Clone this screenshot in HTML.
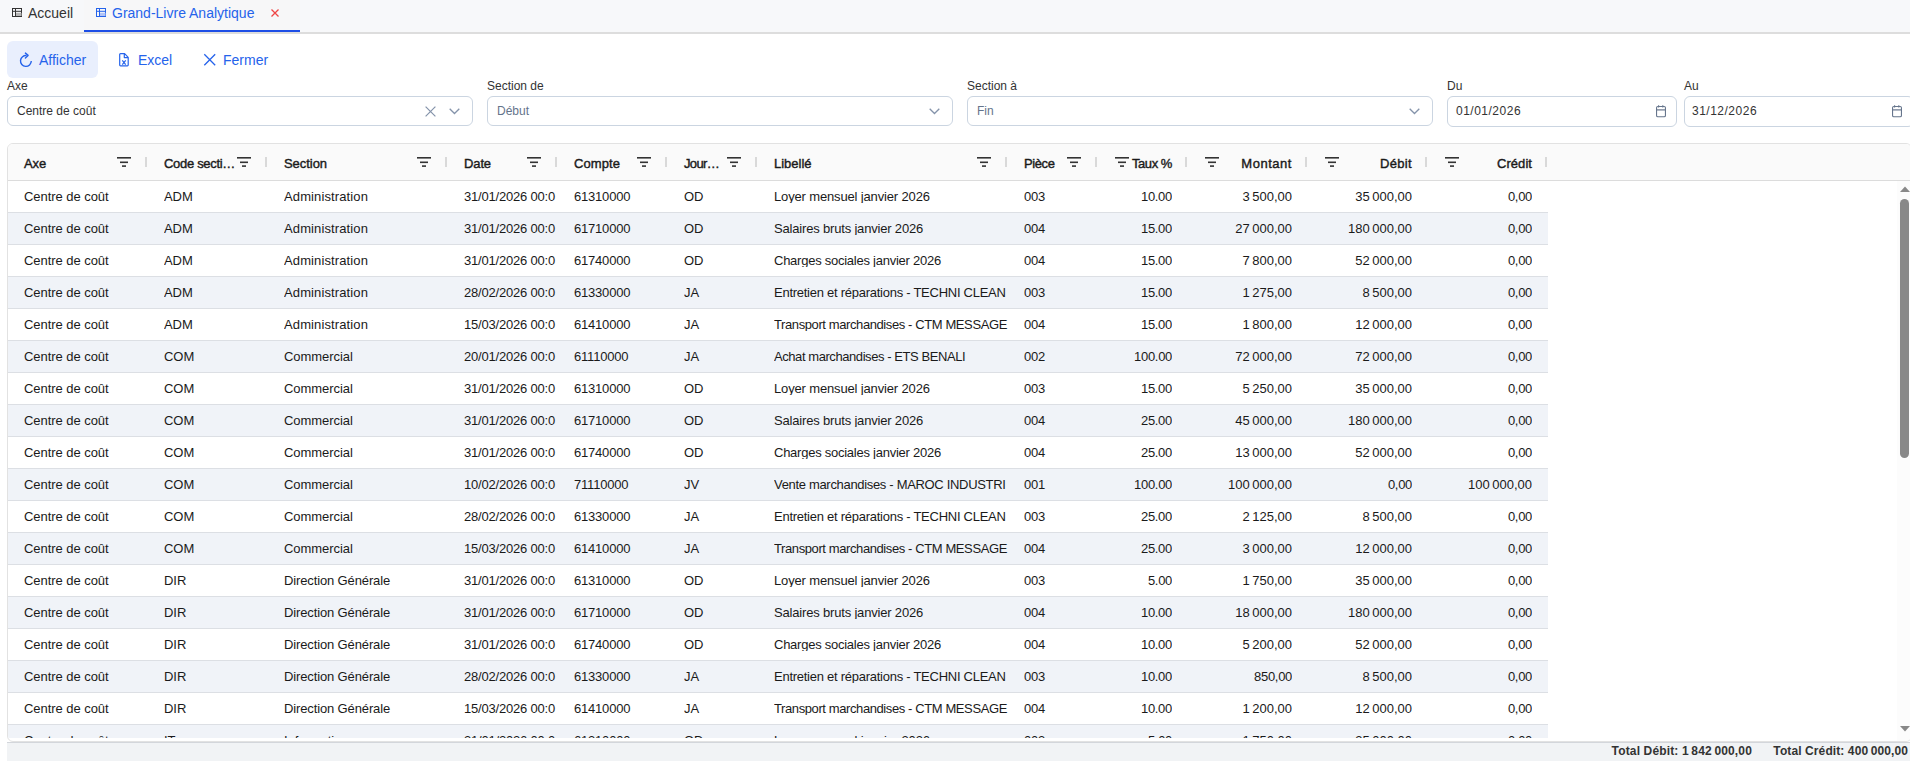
<!DOCTYPE html>
<html><head><meta charset="utf-8"><style>
*{box-sizing:border-box;margin:0;padding:0}
html,body{width:1910px;height:780px;overflow:hidden;background:#fff;font-family:"Liberation Sans",sans-serif;color:#333}
.abs{position:absolute}
#tabs{position:absolute;left:0;top:0;width:1910px;height:34px;background:#f7f8fa;border-bottom:2px solid #dddddd}
.tab{position:absolute;top:0;height:32px;font-size:14px;line-height:14px}
.tab .t{position:absolute;top:6px;white-space:nowrap}
.btn{position:absolute;top:41px;height:37px;border-radius:6px;color:#2563eb;font-size:14px}
.btn .t{position:absolute;top:12px;white-space:nowrap;line-height:14px}
.lbl{position:absolute;top:80px;font-size:12px;line-height:12px;color:#333;white-space:nowrap}
.inp{position:absolute;top:96px;height:30px;border:1px solid #cbd5e1;border-radius:6px;background:#fff;font-size:12px}
.inp .t{position:absolute;top:8px;left:9px;line-height:12px;white-space:nowrap}
#grid{position:absolute;left:7px;top:143px;width:1905px;height:599px;border:1px solid #e2e2e2;border-radius:6px;overflow:hidden;background:#fff}
#hdr{position:absolute;left:0;top:0;width:1906px;height:37px;background:#fafafa;border-bottom:1px solid #dcdcdc}
.hc{position:absolute;top:0;height:36px;font-size:13px;font-weight:normal;color:#1a1a1a;white-space:nowrap;-webkit-text-stroke:0.4px #1a1a1a}
.hc .t{position:absolute;top:13px;line-height:13px}
.hc .fi{position:absolute;top:13px;fill:#333}
.hc .sep{position:absolute;top:13px;width:2px;height:10px;background:#d9d9d9}
#body{position:absolute;left:0;top:37px;width:1889px;height:557px;overflow:hidden}
.row{position:absolute;left:0;width:1540px;height:32px;border-bottom:1px solid #dcdfe4;font-size:13px;color:#1a1a1a}
.row.alt{background:#f0f3f8}
.c{position:absolute;top:9px;line-height:13px;white-space:nowrap;overflow:hidden}
.c.r{text-align:right}
#sb{position:absolute;left:1889px;top:37px;width:14px;height:560px;background:#fcfcfc}
#foot{position:absolute;left:7px;top:742px;width:1903px;height:19px;background:#f1f3f5;border-top:1px solid #d3d6db;font-size:12px;font-weight:bold;color:#333}
#foot .t{position:absolute;top:2px;line-height:12px;white-space:nowrap}
</style></head><body>

<div id="tabs">
 <div class="tab" style="left:0;width:84px">
  <svg class="abs" style="left:12px;top:8px" width="10" height="9" viewBox="0 0 10 9"><rect x="0.5" y="0.5" width="9" height="8" fill="none" stroke="#333" stroke-width="1"/><rect x="4" y="4.8" width="5.5" height="3.2" fill="#b5b5b5"/><path d="M0 3.3H10M3.5 0V9" stroke="#333" stroke-width="1" fill="none"/></svg>
  <span class="t" style="left:28px">Accueil</span>
 </div>
 <div class="tab" style="left:84px;width:216px;background:#f7f7f8">
  <svg class="abs" style="left:12px;top:8px" width="10" height="9" viewBox="0 0 10 9"><rect x="0.5" y="0.5" width="9" height="8" fill="none" stroke="#2563eb" stroke-width="1"/><rect x="4" y="4.8" width="5.5" height="3.2" fill="#b3c5f7"/><path d="M0 3.3H10M3.5 0V9" stroke="#2563eb" stroke-width="1" fill="none"/></svg>
  <span class="t" style="left:28px;color:#2563eb">Grand-Livre Analytique</span>
  <svg class="abs" style="left:187px;top:9px" width="8" height="8" viewBox="0 0 8 8"><path d="M0.5 0.5L7.5 7.5M7.5 0.5L0.5 7.5" stroke="#ef4444" stroke-width="1.3"/></svg>
  <div class="abs" style="left:0;top:30px;width:216px;height:2px;background:#1d4ee6"></div>
 </div>
</div>

<div class="btn" style="left:7px;width:91px;background:#e9effd">
  <svg class="abs" style="left:11px;top:10px" width="16" height="17" viewBox="0 0 16 17"><path d="M13.3 10.1A5.4 5.4 0 1 1 8.6 4.6" fill="none" stroke="#2563eb" stroke-width="1.4"/><path d="M7.4 2.1L10.1 4.4L7.4 6.9" fill="none" stroke="#2563eb" stroke-width="1.4" stroke-linecap="round" stroke-linejoin="round"/></svg>
  <span class="t" style="left:32px">Afficher</span>
</div>
<div class="btn" style="left:106px;width:78px">
  <svg class="abs" style="left:11px;top:12px" width="13" height="14" viewBox="0 0 13 14"><path d="M3.5 0.7H7.6L11.2 4.3V12.1Q11.2 12.9 10.4 12.9H3.5Q2.7 12.9 2.7 12.1V1.5Q2.7 0.7 3.5 0.7Z M7.3 0.7V4.6H11.2" fill="none" stroke="#2563eb" stroke-width="1.2" stroke-linejoin="round"/><path d="M5.3 7.4L8.7 11.7M8.7 7.4L5.3 11.7" stroke="#2563eb" stroke-width="1.2"/></svg>
  <span class="t" style="left:32px">Excel</span>
</div>
<div class="btn" style="left:192px;width:88px">
  <svg class="abs" style="left:11px;top:12px" width="13" height="13" viewBox="0 0 13 13"><path d="M1.3 1.3L12.2 12.2M12.2 1.3L1.3 12.2" stroke="#2563eb" stroke-width="1.3"/></svg>
  <span class="t" style="left:31px">Fermer</span>
</div>

<div class="lbl" style="left:7px">Axe</div>
<div class="inp" style="left:7px;width:466px"><span class="t" style="color:#333">Centre de coût</span>
 <svg class="abs" style="left:417px;top:9px" width="11" height="11" viewBox="0 0 11 11"><path d="M0.6 0.6L10.4 10.4M10.4 0.6L0.6 10.4" stroke="#8493aa" stroke-width="1.2"/></svg>
 <svg class="abs" style="left:441px;top:11px" width="11" height="7" viewBox="0 0 11 7"><path d="M0.7 0.7L5.5 5.5L10.3 0.7" fill="none" stroke="#8493aa" stroke-width="1.3"/></svg></div>
<div class="lbl" style="left:487px">Section de</div>
<div class="inp" style="left:487px;width:466px"><span class="t" style="color:#64748b">Début</span><svg class="abs" style="left:441px;top:11px" width="11" height="7" viewBox="0 0 11 7"><path d="M0.7 0.7L5.5 5.5L10.3 0.7" fill="none" stroke="#8493aa" stroke-width="1.3"/></svg></div>
<div class="lbl" style="left:967px">Section à</div>
<div class="inp" style="left:967px;width:466px"><span class="t" style="color:#64748b">Fin</span><svg class="abs" style="left:441px;top:11px" width="11" height="7" viewBox="0 0 11 7"><path d="M0.7 0.7L5.5 5.5L10.3 0.7" fill="none" stroke="#8493aa" stroke-width="1.3"/></svg></div>
<div class="lbl" style="left:1447px">Du</div>
<div class="inp" style="left:1447px;width:230px;height:31px"><span class="t" style="left:8px;color:#333;letter-spacing:0.5px">01/01/2026</span><svg class="abs" style="left:208px;top:8px" width="10" height="13" viewBox="0 0 10 13"><rect x="0.55" y="1.55" width="8.9" height="10.2" rx="1.3" fill="none" stroke="#66758c" stroke-width="1.1"/><path d="M0.6 4.9H9.4" stroke="#66758c" stroke-width="1.2"/><path d="M2.6 0.2V2.6M6.8 0.2V2.6" stroke="#66758c" stroke-width="1.1"/></svg></div>
<div class="lbl" style="left:1684px">Au</div>
<div class="inp" style="left:1684px;width:230px;height:31px"><span class="t" style="left:7px;color:#333;letter-spacing:0.5px">31/12/2026</span><svg class="abs" style="left:207px;top:8px" width="10" height="13" viewBox="0 0 10 13"><rect x="0.55" y="1.55" width="8.9" height="10.2" rx="1.3" fill="none" stroke="#66758c" stroke-width="1.1"/><path d="M0.6 4.9H9.4" stroke="#66758c" stroke-width="1.2"/><path d="M2.6 0.2V2.6M6.8 0.2V2.6" stroke="#66758c" stroke-width="1.1"/></svg></div>

<div id="grid"><div id="hdr">
<div class="hc" style="left:-1px;width:140px"><span class="t" style="left:17px;letter-spacing:-0.13px">Axe</span><svg class="fi" style="left:110px" width="14" height="11" viewBox="0 0 14 11"><rect x="0" y="0" width="14" height="1.6"/><rect x="3" y="4.5" width="8" height="1.6"/><rect x="5" y="8.3" width="4" height="1.6"/></svg><div class="sep" style="left:138px"></div></div>
<div class="hc" style="left:139px;width:120px"><span class="t" style="left:17px;letter-spacing:-0.31px">Code secti…</span><svg class="fi" style="left:90px" width="14" height="11" viewBox="0 0 14 11"><rect x="0" y="0" width="14" height="1.6"/><rect x="3" y="4.5" width="8" height="1.6"/><rect x="5" y="8.3" width="4" height="1.6"/></svg><div class="sep" style="left:118px"></div></div>
<div class="hc" style="left:259px;width:180px"><span class="t" style="left:17px;letter-spacing:-0.05px">Section</span><svg class="fi" style="left:150px" width="14" height="11" viewBox="0 0 14 11"><rect x="0" y="0" width="14" height="1.6"/><rect x="3" y="4.5" width="8" height="1.6"/><rect x="5" y="8.3" width="4" height="1.6"/></svg><div class="sep" style="left:178px"></div></div>
<div class="hc" style="left:439px;width:110px"><span class="t" style="left:17px;letter-spacing:-0.12px">Date</span><svg class="fi" style="left:80px" width="14" height="11" viewBox="0 0 14 11"><rect x="0" y="0" width="14" height="1.6"/><rect x="3" y="4.5" width="8" height="1.6"/><rect x="5" y="8.3" width="4" height="1.6"/></svg><div class="sep" style="left:108px"></div></div>
<div class="hc" style="left:549px;width:110px"><span class="t" style="left:17px;letter-spacing:0.08px">Compte</span><svg class="fi" style="left:80px" width="14" height="11" viewBox="0 0 14 11"><rect x="0" y="0" width="14" height="1.6"/><rect x="3" y="4.5" width="8" height="1.6"/><rect x="5" y="8.3" width="4" height="1.6"/></svg><div class="sep" style="left:108px"></div></div>
<div class="hc" style="left:659px;width:90px"><span class="t" style="left:17px;letter-spacing:-0.66px">Jour…</span><svg class="fi" style="left:60px" width="14" height="11" viewBox="0 0 14 11"><rect x="0" y="0" width="14" height="1.6"/><rect x="3" y="4.5" width="8" height="1.6"/><rect x="5" y="8.3" width="4" height="1.6"/></svg><div class="sep" style="left:88px"></div></div>
<div class="hc" style="left:749px;width:250px"><span class="t" style="left:17px;letter-spacing:-0.01px">Libellé</span><svg class="fi" style="left:220px" width="14" height="11" viewBox="0 0 14 11"><rect x="0" y="0" width="14" height="1.6"/><rect x="3" y="4.5" width="8" height="1.6"/><rect x="5" y="8.3" width="4" height="1.6"/></svg><div class="sep" style="left:248px"></div></div>
<div class="hc" style="left:999px;width:90px"><span class="t" style="left:17px;letter-spacing:-0.40px">Pièce</span><svg class="fi" style="left:60px" width="14" height="11" viewBox="0 0 14 11"><rect x="0" y="0" width="14" height="1.6"/><rect x="3" y="4.5" width="8" height="1.6"/><rect x="5" y="8.3" width="4" height="1.6"/></svg><div class="sep" style="left:88px"></div></div>
<div class="hc" style="left:1089px;width:90px"><svg class="fi" style="left:18px" width="14" height="11" viewBox="0 0 14 11"><rect x="0" y="0" width="14" height="1.6"/><rect x="3" y="4.5" width="8" height="1.6"/><rect x="5" y="8.3" width="4" height="1.6"/></svg><span class="t" style="right:15px;letter-spacing:-0.44px">Taux %</span><div class="sep" style="left:88px"></div></div>
<div class="hc" style="left:1179px;width:120px"><svg class="fi" style="left:18px" width="14" height="11" viewBox="0 0 14 11"><rect x="0" y="0" width="14" height="1.6"/><rect x="3" y="4.5" width="8" height="1.6"/><rect x="5" y="8.3" width="4" height="1.6"/></svg><span class="t" style="right:15px;letter-spacing:0.53px">Montant</span><div class="sep" style="left:118px"></div></div>
<div class="hc" style="left:1299px;width:120px"><svg class="fi" style="left:18px" width="14" height="11" viewBox="0 0 14 11"><rect x="0" y="0" width="14" height="1.6"/><rect x="3" y="4.5" width="8" height="1.6"/><rect x="5" y="8.3" width="4" height="1.6"/></svg><span class="t" style="right:15px;letter-spacing:0.33px">Débit</span><div class="sep" style="left:118px"></div></div>
<div class="hc" style="left:1419px;width:120px"><svg class="fi" style="left:18px" width="14" height="11" viewBox="0 0 14 11"><rect x="0" y="0" width="14" height="1.6"/><rect x="3" y="4.5" width="8" height="1.6"/><rect x="5" y="8.3" width="4" height="1.6"/></svg><span class="t" style="right:15px;letter-spacing:0.05px">Crédit</span><div class="sep" style="left:118px"></div></div>
</div><div id="body">
<div class="row" style="top:0px">
<span class="c" style="left:16px;width:125px;letter-spacing:-0.05px">Centre de coût</span>
<span class="c" style="left:156px;width:105px;letter-spacing:-0.05px">ADM</span>
<span class="c" style="left:276px;width:165px;letter-spacing:0.12px">Administration</span>
<span class="c" style="left:456px;width:95px;letter-spacing:-0.20px">31/01/2026 00:0</span>
<span class="c" style="left:566px;width:95px;letter-spacing:-0.20px">61310000</span>
<span class="c" style="left:676px;width:75px;letter-spacing:-0.05px">OD</span>
<span class="c" style="left:766px;width:235px;letter-spacing:-0.15px">Loyer mensuel janvier 2026</span>
<span class="c" style="left:1016px;width:75px;letter-spacing:-0.20px">003</span>
<span class="c r" style="left:1089px;width:75px;letter-spacing:-0.3px">10.00</span>
<span class="c r" style="left:1179px;width:105px;letter-spacing:-0.3px">3 500,00</span>
<span class="c r" style="left:1299px;width:105px;letter-spacing:-0.3px">35 000,00</span>
<span class="c r" style="left:1419px;width:105px;letter-spacing:-0.3px">0,00</span>
</div>
<div class="row alt" style="top:32px">
<span class="c" style="left:16px;width:125px;letter-spacing:-0.05px">Centre de coût</span>
<span class="c" style="left:156px;width:105px;letter-spacing:-0.05px">ADM</span>
<span class="c" style="left:276px;width:165px;letter-spacing:0.12px">Administration</span>
<span class="c" style="left:456px;width:95px;letter-spacing:-0.20px">31/01/2026 00:0</span>
<span class="c" style="left:566px;width:95px;letter-spacing:-0.20px">61710000</span>
<span class="c" style="left:676px;width:75px;letter-spacing:-0.05px">OD</span>
<span class="c" style="left:766px;width:235px;letter-spacing:-0.18px">Salaires bruts janvier 2026</span>
<span class="c" style="left:1016px;width:75px;letter-spacing:-0.20px">004</span>
<span class="c r" style="left:1089px;width:75px;letter-spacing:-0.3px">15.00</span>
<span class="c r" style="left:1179px;width:105px;letter-spacing:-0.3px">27 000,00</span>
<span class="c r" style="left:1299px;width:105px;letter-spacing:-0.3px">180 000,00</span>
<span class="c r" style="left:1419px;width:105px;letter-spacing:-0.3px">0,00</span>
</div>
<div class="row" style="top:64px">
<span class="c" style="left:16px;width:125px;letter-spacing:-0.05px">Centre de coût</span>
<span class="c" style="left:156px;width:105px;letter-spacing:-0.05px">ADM</span>
<span class="c" style="left:276px;width:165px;letter-spacing:0.12px">Administration</span>
<span class="c" style="left:456px;width:95px;letter-spacing:-0.20px">31/01/2026 00:0</span>
<span class="c" style="left:566px;width:95px;letter-spacing:-0.20px">61740000</span>
<span class="c" style="left:676px;width:75px;letter-spacing:-0.05px">OD</span>
<span class="c" style="left:766px;width:235px;letter-spacing:-0.25px">Charges sociales janvier 2026</span>
<span class="c" style="left:1016px;width:75px;letter-spacing:-0.20px">004</span>
<span class="c r" style="left:1089px;width:75px;letter-spacing:-0.3px">15.00</span>
<span class="c r" style="left:1179px;width:105px;letter-spacing:-0.3px">7 800,00</span>
<span class="c r" style="left:1299px;width:105px;letter-spacing:-0.3px">52 000,00</span>
<span class="c r" style="left:1419px;width:105px;letter-spacing:-0.3px">0,00</span>
</div>
<div class="row alt" style="top:96px">
<span class="c" style="left:16px;width:125px;letter-spacing:-0.05px">Centre de coût</span>
<span class="c" style="left:156px;width:105px;letter-spacing:-0.05px">ADM</span>
<span class="c" style="left:276px;width:165px;letter-spacing:0.12px">Administration</span>
<span class="c" style="left:456px;width:95px;letter-spacing:-0.20px">28/02/2026 00:0</span>
<span class="c" style="left:566px;width:95px;letter-spacing:-0.20px">61330000</span>
<span class="c" style="left:676px;width:75px;letter-spacing:-0.05px">JA</span>
<span class="c" style="left:766px;width:235px;letter-spacing:-0.26px">Entretien et réparations - TECHNI CLEAN</span>
<span class="c" style="left:1016px;width:75px;letter-spacing:-0.20px">003</span>
<span class="c r" style="left:1089px;width:75px;letter-spacing:-0.3px">15.00</span>
<span class="c r" style="left:1179px;width:105px;letter-spacing:-0.3px">1 275,00</span>
<span class="c r" style="left:1299px;width:105px;letter-spacing:-0.3px">8 500,00</span>
<span class="c r" style="left:1419px;width:105px;letter-spacing:-0.3px">0,00</span>
</div>
<div class="row" style="top:128px">
<span class="c" style="left:16px;width:125px;letter-spacing:-0.05px">Centre de coût</span>
<span class="c" style="left:156px;width:105px;letter-spacing:-0.05px">ADM</span>
<span class="c" style="left:276px;width:165px;letter-spacing:0.12px">Administration</span>
<span class="c" style="left:456px;width:95px;letter-spacing:-0.20px">15/03/2026 00:0</span>
<span class="c" style="left:566px;width:95px;letter-spacing:-0.20px">61410000</span>
<span class="c" style="left:676px;width:75px;letter-spacing:-0.05px">JA</span>
<span class="c" style="left:766px;width:235px;letter-spacing:-0.40px">Transport marchandises - CTM MESSAGE</span>
<span class="c" style="left:1016px;width:75px;letter-spacing:-0.20px">004</span>
<span class="c r" style="left:1089px;width:75px;letter-spacing:-0.3px">15.00</span>
<span class="c r" style="left:1179px;width:105px;letter-spacing:-0.3px">1 800,00</span>
<span class="c r" style="left:1299px;width:105px;letter-spacing:-0.3px">12 000,00</span>
<span class="c r" style="left:1419px;width:105px;letter-spacing:-0.3px">0,00</span>
</div>
<div class="row alt" style="top:160px">
<span class="c" style="left:16px;width:125px;letter-spacing:-0.05px">Centre de coût</span>
<span class="c" style="left:156px;width:105px;letter-spacing:-0.05px">COM</span>
<span class="c" style="left:276px;width:165px;letter-spacing:-0.05px">Commercial</span>
<span class="c" style="left:456px;width:95px;letter-spacing:-0.20px">20/01/2026 00:0</span>
<span class="c" style="left:566px;width:95px;letter-spacing:-0.20px">61110000</span>
<span class="c" style="left:676px;width:75px;letter-spacing:-0.05px">JA</span>
<span class="c" style="left:766px;width:235px;letter-spacing:-0.43px">Achat marchandises - ETS BENALI</span>
<span class="c" style="left:1016px;width:75px;letter-spacing:-0.20px">002</span>
<span class="c r" style="left:1089px;width:75px;letter-spacing:-0.3px">100.00</span>
<span class="c r" style="left:1179px;width:105px;letter-spacing:-0.3px">72 000,00</span>
<span class="c r" style="left:1299px;width:105px;letter-spacing:-0.3px">72 000,00</span>
<span class="c r" style="left:1419px;width:105px;letter-spacing:-0.3px">0,00</span>
</div>
<div class="row" style="top:192px">
<span class="c" style="left:16px;width:125px;letter-spacing:-0.05px">Centre de coût</span>
<span class="c" style="left:156px;width:105px;letter-spacing:-0.05px">COM</span>
<span class="c" style="left:276px;width:165px;letter-spacing:-0.05px">Commercial</span>
<span class="c" style="left:456px;width:95px;letter-spacing:-0.20px">31/01/2026 00:0</span>
<span class="c" style="left:566px;width:95px;letter-spacing:-0.20px">61310000</span>
<span class="c" style="left:676px;width:75px;letter-spacing:-0.05px">OD</span>
<span class="c" style="left:766px;width:235px;letter-spacing:-0.15px">Loyer mensuel janvier 2026</span>
<span class="c" style="left:1016px;width:75px;letter-spacing:-0.20px">003</span>
<span class="c r" style="left:1089px;width:75px;letter-spacing:-0.3px">15.00</span>
<span class="c r" style="left:1179px;width:105px;letter-spacing:-0.3px">5 250,00</span>
<span class="c r" style="left:1299px;width:105px;letter-spacing:-0.3px">35 000,00</span>
<span class="c r" style="left:1419px;width:105px;letter-spacing:-0.3px">0,00</span>
</div>
<div class="row alt" style="top:224px">
<span class="c" style="left:16px;width:125px;letter-spacing:-0.05px">Centre de coût</span>
<span class="c" style="left:156px;width:105px;letter-spacing:-0.05px">COM</span>
<span class="c" style="left:276px;width:165px;letter-spacing:-0.05px">Commercial</span>
<span class="c" style="left:456px;width:95px;letter-spacing:-0.20px">31/01/2026 00:0</span>
<span class="c" style="left:566px;width:95px;letter-spacing:-0.20px">61710000</span>
<span class="c" style="left:676px;width:75px;letter-spacing:-0.05px">OD</span>
<span class="c" style="left:766px;width:235px;letter-spacing:-0.18px">Salaires bruts janvier 2026</span>
<span class="c" style="left:1016px;width:75px;letter-spacing:-0.20px">004</span>
<span class="c r" style="left:1089px;width:75px;letter-spacing:-0.3px">25.00</span>
<span class="c r" style="left:1179px;width:105px;letter-spacing:-0.3px">45 000,00</span>
<span class="c r" style="left:1299px;width:105px;letter-spacing:-0.3px">180 000,00</span>
<span class="c r" style="left:1419px;width:105px;letter-spacing:-0.3px">0,00</span>
</div>
<div class="row" style="top:256px">
<span class="c" style="left:16px;width:125px;letter-spacing:-0.05px">Centre de coût</span>
<span class="c" style="left:156px;width:105px;letter-spacing:-0.05px">COM</span>
<span class="c" style="left:276px;width:165px;letter-spacing:-0.05px">Commercial</span>
<span class="c" style="left:456px;width:95px;letter-spacing:-0.20px">31/01/2026 00:0</span>
<span class="c" style="left:566px;width:95px;letter-spacing:-0.20px">61740000</span>
<span class="c" style="left:676px;width:75px;letter-spacing:-0.05px">OD</span>
<span class="c" style="left:766px;width:235px;letter-spacing:-0.25px">Charges sociales janvier 2026</span>
<span class="c" style="left:1016px;width:75px;letter-spacing:-0.20px">004</span>
<span class="c r" style="left:1089px;width:75px;letter-spacing:-0.3px">25.00</span>
<span class="c r" style="left:1179px;width:105px;letter-spacing:-0.3px">13 000,00</span>
<span class="c r" style="left:1299px;width:105px;letter-spacing:-0.3px">52 000,00</span>
<span class="c r" style="left:1419px;width:105px;letter-spacing:-0.3px">0,00</span>
</div>
<div class="row alt" style="top:288px">
<span class="c" style="left:16px;width:125px;letter-spacing:-0.05px">Centre de coût</span>
<span class="c" style="left:156px;width:105px;letter-spacing:-0.05px">COM</span>
<span class="c" style="left:276px;width:165px;letter-spacing:-0.05px">Commercial</span>
<span class="c" style="left:456px;width:95px;letter-spacing:-0.20px">10/02/2026 00:0</span>
<span class="c" style="left:566px;width:95px;letter-spacing:-0.20px">71110000</span>
<span class="c" style="left:676px;width:75px;letter-spacing:-0.05px">JV</span>
<span class="c" style="left:766px;width:235px;letter-spacing:-0.32px">Vente marchandises - MAROC INDUSTRI</span>
<span class="c" style="left:1016px;width:75px;letter-spacing:-0.20px">001</span>
<span class="c r" style="left:1089px;width:75px;letter-spacing:-0.3px">100.00</span>
<span class="c r" style="left:1179px;width:105px;letter-spacing:-0.3px">100 000,00</span>
<span class="c r" style="left:1299px;width:105px;letter-spacing:-0.3px">0,00</span>
<span class="c r" style="left:1419px;width:105px;letter-spacing:-0.3px">100 000,00</span>
</div>
<div class="row" style="top:320px">
<span class="c" style="left:16px;width:125px;letter-spacing:-0.05px">Centre de coût</span>
<span class="c" style="left:156px;width:105px;letter-spacing:-0.05px">COM</span>
<span class="c" style="left:276px;width:165px;letter-spacing:-0.05px">Commercial</span>
<span class="c" style="left:456px;width:95px;letter-spacing:-0.20px">28/02/2026 00:0</span>
<span class="c" style="left:566px;width:95px;letter-spacing:-0.20px">61330000</span>
<span class="c" style="left:676px;width:75px;letter-spacing:-0.05px">JA</span>
<span class="c" style="left:766px;width:235px;letter-spacing:-0.26px">Entretien et réparations - TECHNI CLEAN</span>
<span class="c" style="left:1016px;width:75px;letter-spacing:-0.20px">003</span>
<span class="c r" style="left:1089px;width:75px;letter-spacing:-0.3px">25.00</span>
<span class="c r" style="left:1179px;width:105px;letter-spacing:-0.3px">2 125,00</span>
<span class="c r" style="left:1299px;width:105px;letter-spacing:-0.3px">8 500,00</span>
<span class="c r" style="left:1419px;width:105px;letter-spacing:-0.3px">0,00</span>
</div>
<div class="row alt" style="top:352px">
<span class="c" style="left:16px;width:125px;letter-spacing:-0.05px">Centre de coût</span>
<span class="c" style="left:156px;width:105px;letter-spacing:-0.05px">COM</span>
<span class="c" style="left:276px;width:165px;letter-spacing:-0.05px">Commercial</span>
<span class="c" style="left:456px;width:95px;letter-spacing:-0.20px">15/03/2026 00:0</span>
<span class="c" style="left:566px;width:95px;letter-spacing:-0.20px">61410000</span>
<span class="c" style="left:676px;width:75px;letter-spacing:-0.05px">JA</span>
<span class="c" style="left:766px;width:235px;letter-spacing:-0.40px">Transport marchandises - CTM MESSAGE</span>
<span class="c" style="left:1016px;width:75px;letter-spacing:-0.20px">004</span>
<span class="c r" style="left:1089px;width:75px;letter-spacing:-0.3px">25.00</span>
<span class="c r" style="left:1179px;width:105px;letter-spacing:-0.3px">3 000,00</span>
<span class="c r" style="left:1299px;width:105px;letter-spacing:-0.3px">12 000,00</span>
<span class="c r" style="left:1419px;width:105px;letter-spacing:-0.3px">0,00</span>
</div>
<div class="row" style="top:384px">
<span class="c" style="left:16px;width:125px;letter-spacing:-0.05px">Centre de coût</span>
<span class="c" style="left:156px;width:105px;letter-spacing:-0.05px">DIR</span>
<span class="c" style="left:276px;width:165px;letter-spacing:-0.13px">Direction Générale</span>
<span class="c" style="left:456px;width:95px;letter-spacing:-0.20px">31/01/2026 00:0</span>
<span class="c" style="left:566px;width:95px;letter-spacing:-0.20px">61310000</span>
<span class="c" style="left:676px;width:75px;letter-spacing:-0.05px">OD</span>
<span class="c" style="left:766px;width:235px;letter-spacing:-0.15px">Loyer mensuel janvier 2026</span>
<span class="c" style="left:1016px;width:75px;letter-spacing:-0.20px">003</span>
<span class="c r" style="left:1089px;width:75px;letter-spacing:-0.3px">5.00</span>
<span class="c r" style="left:1179px;width:105px;letter-spacing:-0.3px">1 750,00</span>
<span class="c r" style="left:1299px;width:105px;letter-spacing:-0.3px">35 000,00</span>
<span class="c r" style="left:1419px;width:105px;letter-spacing:-0.3px">0,00</span>
</div>
<div class="row alt" style="top:416px">
<span class="c" style="left:16px;width:125px;letter-spacing:-0.05px">Centre de coût</span>
<span class="c" style="left:156px;width:105px;letter-spacing:-0.05px">DIR</span>
<span class="c" style="left:276px;width:165px;letter-spacing:-0.13px">Direction Générale</span>
<span class="c" style="left:456px;width:95px;letter-spacing:-0.20px">31/01/2026 00:0</span>
<span class="c" style="left:566px;width:95px;letter-spacing:-0.20px">61710000</span>
<span class="c" style="left:676px;width:75px;letter-spacing:-0.05px">OD</span>
<span class="c" style="left:766px;width:235px;letter-spacing:-0.18px">Salaires bruts janvier 2026</span>
<span class="c" style="left:1016px;width:75px;letter-spacing:-0.20px">004</span>
<span class="c r" style="left:1089px;width:75px;letter-spacing:-0.3px">10.00</span>
<span class="c r" style="left:1179px;width:105px;letter-spacing:-0.3px">18 000,00</span>
<span class="c r" style="left:1299px;width:105px;letter-spacing:-0.3px">180 000,00</span>
<span class="c r" style="left:1419px;width:105px;letter-spacing:-0.3px">0,00</span>
</div>
<div class="row" style="top:448px">
<span class="c" style="left:16px;width:125px;letter-spacing:-0.05px">Centre de coût</span>
<span class="c" style="left:156px;width:105px;letter-spacing:-0.05px">DIR</span>
<span class="c" style="left:276px;width:165px;letter-spacing:-0.13px">Direction Générale</span>
<span class="c" style="left:456px;width:95px;letter-spacing:-0.20px">31/01/2026 00:0</span>
<span class="c" style="left:566px;width:95px;letter-spacing:-0.20px">61740000</span>
<span class="c" style="left:676px;width:75px;letter-spacing:-0.05px">OD</span>
<span class="c" style="left:766px;width:235px;letter-spacing:-0.25px">Charges sociales janvier 2026</span>
<span class="c" style="left:1016px;width:75px;letter-spacing:-0.20px">004</span>
<span class="c r" style="left:1089px;width:75px;letter-spacing:-0.3px">10.00</span>
<span class="c r" style="left:1179px;width:105px;letter-spacing:-0.3px">5 200,00</span>
<span class="c r" style="left:1299px;width:105px;letter-spacing:-0.3px">52 000,00</span>
<span class="c r" style="left:1419px;width:105px;letter-spacing:-0.3px">0,00</span>
</div>
<div class="row alt" style="top:480px">
<span class="c" style="left:16px;width:125px;letter-spacing:-0.05px">Centre de coût</span>
<span class="c" style="left:156px;width:105px;letter-spacing:-0.05px">DIR</span>
<span class="c" style="left:276px;width:165px;letter-spacing:-0.13px">Direction Générale</span>
<span class="c" style="left:456px;width:95px;letter-spacing:-0.20px">28/02/2026 00:0</span>
<span class="c" style="left:566px;width:95px;letter-spacing:-0.20px">61330000</span>
<span class="c" style="left:676px;width:75px;letter-spacing:-0.05px">JA</span>
<span class="c" style="left:766px;width:235px;letter-spacing:-0.26px">Entretien et réparations - TECHNI CLEAN</span>
<span class="c" style="left:1016px;width:75px;letter-spacing:-0.20px">003</span>
<span class="c r" style="left:1089px;width:75px;letter-spacing:-0.3px">10.00</span>
<span class="c r" style="left:1179px;width:105px;letter-spacing:-0.3px">850,00</span>
<span class="c r" style="left:1299px;width:105px;letter-spacing:-0.3px">8 500,00</span>
<span class="c r" style="left:1419px;width:105px;letter-spacing:-0.3px">0,00</span>
</div>
<div class="row" style="top:512px">
<span class="c" style="left:16px;width:125px;letter-spacing:-0.05px">Centre de coût</span>
<span class="c" style="left:156px;width:105px;letter-spacing:-0.05px">DIR</span>
<span class="c" style="left:276px;width:165px;letter-spacing:-0.13px">Direction Générale</span>
<span class="c" style="left:456px;width:95px;letter-spacing:-0.20px">15/03/2026 00:0</span>
<span class="c" style="left:566px;width:95px;letter-spacing:-0.20px">61410000</span>
<span class="c" style="left:676px;width:75px;letter-spacing:-0.05px">JA</span>
<span class="c" style="left:766px;width:235px;letter-spacing:-0.40px">Transport marchandises - CTM MESSAGE</span>
<span class="c" style="left:1016px;width:75px;letter-spacing:-0.20px">004</span>
<span class="c r" style="left:1089px;width:75px;letter-spacing:-0.3px">10.00</span>
<span class="c r" style="left:1179px;width:105px;letter-spacing:-0.3px">1 200,00</span>
<span class="c r" style="left:1299px;width:105px;letter-spacing:-0.3px">12 000,00</span>
<span class="c r" style="left:1419px;width:105px;letter-spacing:-0.3px">0,00</span>
</div>
<div class="row alt" style="top:544px">
<span class="c" style="left:16px;width:125px;letter-spacing:-0.05px">Centre de coût</span>
<span class="c" style="left:156px;width:105px;letter-spacing:-0.05px">IT</span>
<span class="c" style="left:276px;width:165px;letter-spacing:-0.05px">Informatique</span>
<span class="c" style="left:456px;width:95px;letter-spacing:-0.20px">31/01/2026 00:0</span>
<span class="c" style="left:566px;width:95px;letter-spacing:-0.20px">61310000</span>
<span class="c" style="left:676px;width:75px;letter-spacing:-0.05px">OD</span>
<span class="c" style="left:766px;width:235px;letter-spacing:-0.15px">Loyer mensuel janvier 2026</span>
<span class="c" style="left:1016px;width:75px;letter-spacing:-0.20px">003</span>
<span class="c r" style="left:1089px;width:75px;letter-spacing:-0.3px">5.00</span>
<span class="c r" style="left:1179px;width:105px;letter-spacing:-0.3px">1 750,00</span>
<span class="c r" style="left:1299px;width:105px;letter-spacing:-0.3px">35 000,00</span>
<span class="c r" style="left:1419px;width:105px;letter-spacing:-0.3px">0,00</span>
</div>
</div>
<div id="sb">
 <svg class="abs" style="left:3px;top:5px" width="10" height="6" viewBox="0 0 10 6"><path d="M0 6L5 0.5L10 6Z" fill="#888"/></svg>
 <div class="abs" style="left:3px;top:18px;width:9px;height:259px;border-radius:5px;background:#888"></div>
 <svg class="abs" style="left:3px;top:545px" width="10" height="6" viewBox="0 0 10 6"><path d="M0 0L5 5.5L10 0Z" fill="#888"/></svg>
</div>
</div>
<div id="foot"><span class="t" style="right:158px;letter-spacing:0.15px">Total Débit: 1 842 000,00</span><span class="t" style="right:2px;letter-spacing:0.1px">Total Crédit: 400 000,00</span></div>
</body></html>
